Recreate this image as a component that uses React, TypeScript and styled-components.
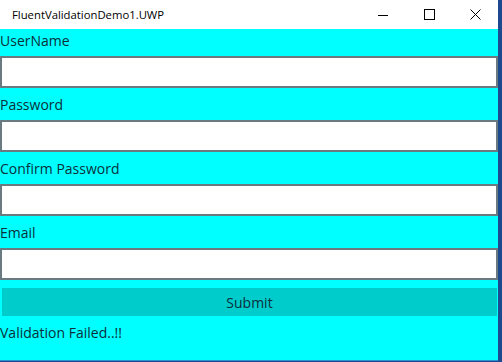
import styled, { createGlobalStyle } from "styled-components";

const GlobalStyle = createGlobalStyle`
  html, body {
    margin: 0;
    padding: 0;
    background: #1d4a8f;
    overflow: hidden;
  }
  * { box-sizing: border-box; }
`;

const Window = styled.div`
  width: 498px;
  height: 361px;
  display: flex;
  flex-direction: column;
  background: #00ffff;
  font-family: "Open Sans", "Noto Sans", sans-serif;
  border-bottom: 1px solid #2a8fd0;
`;

const TitleBar = styled.div`
  height: 29px;
  display: flex;
  align-items: center;
  background: #ffffff;
  padding-left: 12px;
`;

const Title = styled.span`
  flex: 1;
  font-size: 11.3px;
  color: #000;
`;

const Caption = styled.div`
  width: 46px;
  height: 29px;
  display: flex;
  align-items: center;
  justify-content: center;
`;

const Form = styled.div`
  display: flex;
  flex-direction: column;
`;

const Label = styled.div`
  height: 27px;
  padding-top: 2px;
  font-size: 14px;
  color: #0b2f3a;
`;

const Input = styled.input`
  height: 32px;
  width: 100%;
  border: 2px solid #6a7a80;
  background: #ffffff;
  margin: 0 0 5px 0;
  outline: none;
`;

const Submit = styled.button`
  margin: 3px 1px 0 2px;
  height: 28px;
  border: none;
  background: #00cccc;
  font-family: inherit;
  font-size: 14px;
  color: #0b2f3a;
  padding: 0;
`;

const Message = styled.div`
  padding-top: 7px;
  font-size: 14px;
  color: #0b2f3a;
`;

const fields = ["UserName", "Password", "Confirm Password", "Email"];

export default function App() {
  return (
    <>
      <GlobalStyle />
      <Window>
        <TitleBar>
          <Title>FluentValidationDemo1.UWP</Title>
          <Caption>
            <svg width="10" height="10" viewBox="0 0 10 10">
              <path d="M0 5.5h10" stroke="#000" strokeWidth="1" />
            </svg>
          </Caption>
          <Caption>
            <svg width="11" height="11" viewBox="0 0 11 11">
              <rect x="0.5" y="0.5" width="10" height="10" fill="none" stroke="#000" strokeWidth="1" />
            </svg>
          </Caption>
          <Caption>
            <svg width="11" height="11" viewBox="0 0 11 11">
              <path d="M0.5 0.5L10.5 10.5M10.5 0.5L0.5 10.5" stroke="#000" strokeWidth="1" />
            </svg>
          </Caption>
        </TitleBar>
        <Form>
          {fields.map((f) => (
            <div key={f}>
              <Label>{f}</Label>
              <Input type={f.includes("Password") ? "password" : "text"} />
            </div>
          ))}
          <Submit>Submit</Submit>
          <Message>Validation Failed..!!</Message>
        </Form>
      </Window>
    </>
  );
}
